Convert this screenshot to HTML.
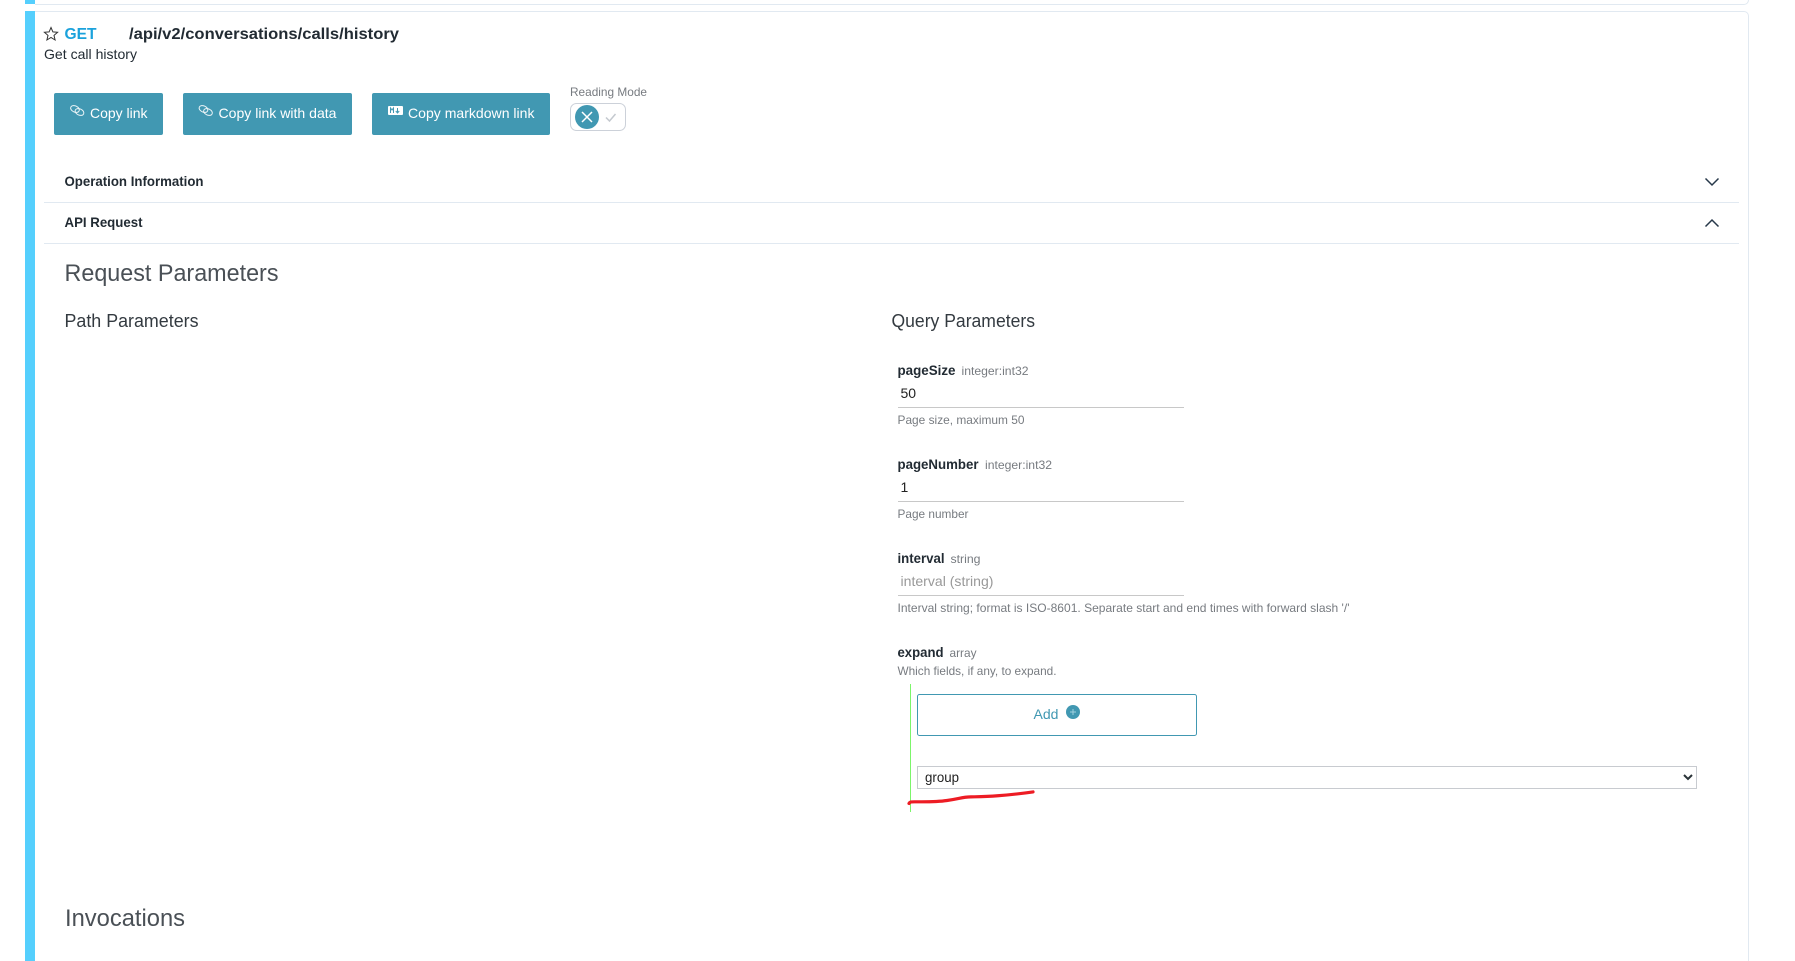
<!DOCTYPE html>
<html lang="en"><head><meta charset="utf-8"><title>GET /api/v2/conversations/calls/history</title>
<style>
html,body{margin:0;padding:0;background:#fff;width:1795px;height:961px;overflow:hidden}
svg{position:absolute;left:0;top:0;display:block}
text{font-family:"Liberation Sans",Arial,sans-serif;font-size:14px;fill:#222b33}
.b{font-weight:700}
.g{font-size:12px;fill:#777b80}
.w{fill:#fff}
.h2{font-size:24px;fill:#4a5056}
.h3{font-size:18px;fill:#333a40}
.v{fill:#222}
</style></head><body>
<svg width="1795" height="961" viewBox="0 0 1795 961" xmlns="http://www.w3.org/2000/svg">
<rect width="1795" height="961" fill="#fff"/>
<path d="M35 4.5H1744a4.500 4.500 0 0 0 4.500-4.500" fill="none" stroke="#e1e9f1"/>
<path d="M35 11.500H1744a4.500 4.500 0 0 1 4.500 4.500V961" fill="none" stroke="#e1e9f1"/>
<rect x="25" y="0" width="10" height="4" fill="#55cffd"/>
<rect x="25" y="11" width="10" height="950" fill="#55cffd"/>
<path d="M51 27.500l1.900 4.400 4.700.4-3.600 3.100 1.100 4.600-4.100-2.500-4.100 2.500 1.100-4.600-3.600-3.100 4.700-.4z" fill="none" stroke="#333" stroke-width="1"/>
<text class="b" x="64.500" y="39" style="font-size:16px;fill:#1ba2dc" textLength="32" lengthAdjust="spacingAndGlyphs">GET</text>
<text class="b" x="129" y="39" style="font-size:16px" textLength="270" lengthAdjust="spacingAndGlyphs">/api/v2/conversations/calls/history</text>
<text x="44" y="59" textLength="93" lengthAdjust="spacingAndGlyphs">Get call history</text>
<rect x="54" y="93" width="109" height="42" rx="2" fill="#4198b2"/>
<rect x="183" y="93" width="169" height="42" rx="2" fill="#4198b2"/>
<rect x="372" y="93" width="178" height="42" rx="2" fill="#4198b2"/>
<g fill="none" stroke="#fff" stroke-width="1" opacity=".9">
<g transform="translate(70 105)"><ellipse cx="5" cy="4" rx="4.600" ry="3.100" transform="rotate(25 5 4)"/><ellipse cx="9.500" cy="7" rx="4.600" ry="3.100" transform="rotate(25 9.500 7)"/></g>
<g transform="translate(198.500 105)"><ellipse cx="5" cy="4" rx="4.600" ry="3.100" transform="rotate(25 5 4)"/><ellipse cx="9.500" cy="7" rx="4.600" ry="3.100" transform="rotate(25 9.500 7)"/></g>
</g>
<rect x="388" y="106" width="15" height="9" rx="1" fill="#fff"/>
<path d="M390.500 113v-5l1.500 2 1.500-2v5M397.500 108v4.500M395.800 111l1.700 2 1.700-2" fill="none" stroke="#4198b2" stroke-width="1"/>
<text class="w" x="90" y="118" textLength="57.500" lengthAdjust="spacingAndGlyphs">Copy link</text>
<text class="w" x="218.500" y="118" textLength="118" lengthAdjust="spacingAndGlyphs">Copy link with data</text>
<text class="w" x="408" y="118" textLength="126.500" lengthAdjust="spacingAndGlyphs">Copy markdown link</text>
<text class="g" x="570" y="96" textLength="77" lengthAdjust="spacingAndGlyphs">Reading Mode</text>
<rect x="570.500" y="103.500" width="55" height="27" rx="6" fill="#fff" stroke="#ccd1d9"/>
<circle cx="587" cy="117" r="12" fill="#4198b2"/>
<path d="M582 112l10 10M592 112l-10 10" stroke="#fff" stroke-width="1.500" fill="none"/>
<path d="M606 117.500l3.500 3.500 6-7" stroke="#c4c9cf" stroke-width="1.500" fill="none"/>
<text class="b" x="64.500" y="186" textLength="139" lengthAdjust="spacingAndGlyphs">Operation Information</text>
<path d="M1705.500 178.500l6.500 6.500 6.500-6.500" fill="none" stroke="#27384a" stroke-width="1.500"/>
<rect x="44" y="202" width="1695" height="1" fill="#e1e9f1"/>
<text class="b" x="64.500" y="227" textLength="78" lengthAdjust="spacingAndGlyphs">API Request</text>
<path d="M1705.500 226.500l6.500-6.500 6.500 6.500" fill="none" stroke="#27384a" stroke-width="1.500"/>
<rect x="44" y="243" width="1695" height="1" fill="#e1e9f1"/>
<text class="h2" x="64.500" y="281" textLength="214" lengthAdjust="spacingAndGlyphs">Request Parameters</text>
<text class="h3" x="64.500" y="327" textLength="134" lengthAdjust="spacingAndGlyphs">Path Parameters</text>
<text class="h3" x="891.500" y="327" textLength="143.500" lengthAdjust="spacingAndGlyphs">Query Parameters</text>
<text class="b" x="897.500" y="375" textLength="58" lengthAdjust="spacingAndGlyphs">pageSize</text>
<text class="g" x="961.500" y="375" textLength="67" lengthAdjust="spacingAndGlyphs">integer:int32</text>
<text class="v" x="900.500" y="398">50</text>
<rect x="898" y="407" width="286" height="1" fill="#c8c8c8"/>
<text class="g" x="897.500" y="424" textLength="127" lengthAdjust="spacingAndGlyphs">Page size, maximum 50</text>
<text class="b" x="897.500" y="469" textLength="81" lengthAdjust="spacingAndGlyphs">pageNumber</text>
<text class="g" x="985" y="469" textLength="67" lengthAdjust="spacingAndGlyphs">integer:int32</text>
<text class="v" x="900.500" y="492">1</text>
<rect x="898" y="501" width="286" height="1" fill="#c8c8c8"/>
<text class="g" x="897.500" y="518" textLength="71" lengthAdjust="spacingAndGlyphs">Page number</text>
<text class="b" x="897.500" y="563" textLength="47" lengthAdjust="spacingAndGlyphs">interval</text>
<text class="g" x="950.500" y="563" textLength="30" lengthAdjust="spacingAndGlyphs">string</text>
<text x="900.500" y="586" style="fill:#999" textLength="93" lengthAdjust="spacingAndGlyphs">interval (string)</text>
<rect x="898" y="595" width="286" height="1" fill="#c8c8c8"/>
<text class="g" x="897.500" y="612" textLength="452" lengthAdjust="spacingAndGlyphs">Interval string; format is ISO-8601. Separate start and end times with forward slash '/'</text>
<text class="b" x="897.500" y="657" textLength="46" lengthAdjust="spacingAndGlyphs">expand</text>
<text class="g" x="949.500" y="657" textLength="27" lengthAdjust="spacingAndGlyphs">array</text>
<text class="g" x="897.500" y="675" textLength="159" lengthAdjust="spacingAndGlyphs">Which fields, if any, to expand.</text>
<rect x="910" y="684" width="1" height="128" fill="#7cf56a"/>
<rect x="917.500" y="694.500" width="279" height="41" rx="2" fill="#fff" stroke="#4198b2"/>
<text x="1033.500" y="719" style="fill:#4198b2" textLength="25" lengthAdjust="spacingAndGlyphs">Add</text>
<circle cx="1073" cy="712" r="7" fill="#4198b2"/>
<path d="M1073 709v6M1070 712h6" stroke="#9fd0de" stroke-width="1" fill="none"/>
<rect x="917.500" y="766.500" width="779" height="22" fill="#fff" stroke="#c8cbd0"/>
<text x="925" y="782" style="fill:#222" textLength="34" lengthAdjust="spacingAndGlyphs">group</text>
<path d="M1684 775l4 4 4-4" fill="none" stroke="#2a3338" stroke-width="2"/>
<path d="M909 803.500c1-2 3-1.700 8-1.700 12 0 20 .2 30-1.300 12-1.500 15-3.500 24-3.600 14-.4 30-.5 62-5" fill="none" stroke="#ed1c24" stroke-width="3.200" stroke-linecap="round"/>
<text class="h2" x="65" y="926" textLength="120" lengthAdjust="spacingAndGlyphs">Invocations</text>
</svg>
</body></html>
